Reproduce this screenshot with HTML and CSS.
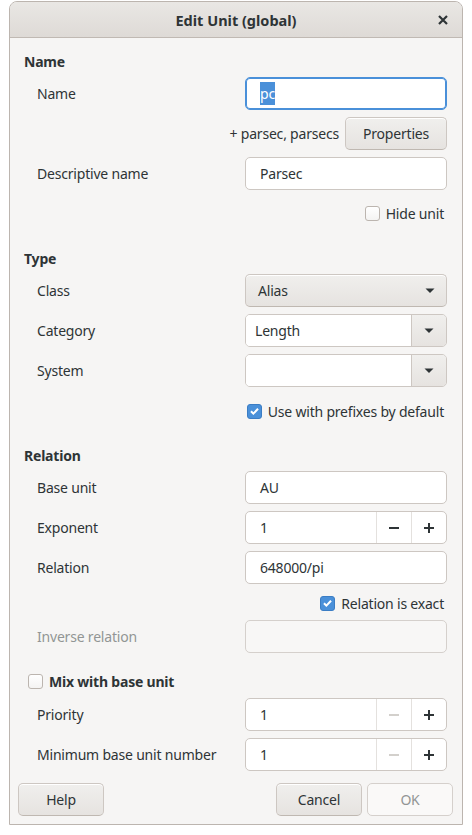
FILE: index.html
```html
<!DOCTYPE html>
<html lang="en">
<head>
<meta charset="utf-8">
<title>Edit Unit (global)</title>
<link rel="stylesheet" href="styles.css">
</head>
<body>
<div class="window">
  <header class="titlebar">
    <span></span>
    <span class="title">Edit Unit (global)</span>
    <span class="close">
      <svg width="10" height="10" viewBox="0 0 10 10"><path d="M1 1L9 9M9 1L1 9" stroke="#2e3436" stroke-width="2.2" stroke-linecap="butt"/></svg>
    </span>
  </header>

  <main class="content">
    <section class="group">
      <h2 class="heading">Name</h2>
      <div class="row">
        <span class="label">Name</span>
        <div class="entry focused"><span class="sel">pc</span></div>
      </div>
      <div class="row line-right">
        <span class="names">+ parsec, parsecs</span>
        <button class="btn props">Properties</button>
      </div>
      <div class="row">
        <span class="label">Descriptive name</span>
        <div class="entry">Parsec</div>
      </div>
      <div class="check-row hide-row">
        <span class="check"></span><span>Hide unit</span>
      </div>
    </section>

    <section class="group type-group">
      <h2 class="heading">Type</h2>
      <div class="row">
        <span class="label">Class</span>
        <div class="combo-btn"><span>Alias</span>
          <svg class="arrow" width="10" height="6" viewBox="0 0 10 6"><path d="M0.5 0.5h9l-4.5 4.5z" fill="#2e3436"/></svg>
        </div>
      </div>
      <div class="row">
        <span class="label">Category</span>
        <div class="combo-entry"><span class="combo-text">Length</span>
          <span class="combo-arrow"><svg width="10" height="6" viewBox="0 0 10 6"><path d="M0.5 0.5h9l-4.5 4.5z" fill="#2e3436"/></svg></span>
        </div>
      </div>
      <div class="row">
        <span class="label">System</span>
        <div class="combo-entry"><span class="combo-text"></span>
          <span class="combo-arrow"><svg width="10" height="6" viewBox="0 0 10 6"><path d="M0.5 0.5h9l-4.5 4.5z" fill="#2e3436"/></svg></span>
        </div>
      </div>
      <div class="check-row prefix-row">
        <span class="check on"><svg width="14" height="14" viewBox="0 0 14 14"><path d="M3.2 7.2l2.6 2.6 5-5.2" fill="none" stroke="#fff" stroke-width="2.2"/></svg></span><span>Use with prefixes by default</span>
      </div>
    </section>

    <section class="group relation-group">
      <h2 class="heading">Relation</h2>
      <div class="row">
        <span class="label">Base unit</span>
        <div class="entry">AU</div>
      </div>
      <div class="row">
        <span class="label">Exponent</span>
        <div class="spin">
          <span class="spin-text">1</span>
          <span class="spin-btn"><svg width="10" height="10" viewBox="0 0 10 10"><path d="M0 5h10" stroke="#2e3436" stroke-width="2"/></svg></span>
          <span class="spin-btn"><svg width="10" height="10" viewBox="0 0 10 10"><path d="M0 5h10M5 0v10" stroke="#2e3436" stroke-width="2"/></svg></span>
        </div>
      </div>
      <div class="row">
        <span class="label">Relation</span>
        <div class="entry">648000/pi</div>
      </div>
      <div class="check-row exact-row">
        <span class="check on"><svg width="14" height="14" viewBox="0 0 14 14"><path d="M3.2 7.2l2.6 2.6 5-5.2" fill="none" stroke="#fff" stroke-width="2.2"/></svg></span><span>Relation is exact</span>
      </div>
      <div class="row">
        <span class="label disabled">Inverse relation</span>
        <div class="entry disabled"></div>
      </div>
    </section>

    <section class="group mix-group">
      <div class="mix-head">
        <span class="check"></span><span class="heading-text">Mix with base unit</span>
      </div>
      <div class="row">
        <span class="label">Priority</span>
        <div class="spin">
          <span class="spin-text">1</span>
          <span class="spin-btn"><svg width="10" height="10" viewBox="0 0 10 10"><path d="M0 5h10" stroke="#d3d0cc" stroke-width="2"/></svg></span>
          <span class="spin-btn"><svg width="10" height="10" viewBox="0 0 10 10"><path d="M0 5h10M5 0v10" stroke="#2e3436" stroke-width="2"/></svg></span>
        </div>
      </div>
      <div class="row">
        <span class="label">Minimum base unit number</span>
        <div class="spin">
          <span class="spin-text">1</span>
          <span class="spin-btn"><svg width="10" height="10" viewBox="0 0 10 10"><path d="M0 5h10" stroke="#d3d0cc" stroke-width="2"/></svg></span>
          <span class="spin-btn"><svg width="10" height="10" viewBox="0 0 10 10"><path d="M0 5h10M5 0v10" stroke="#2e3436" stroke-width="2"/></svg></span>
        </div>
      </div>
    </section>
  </main>

  <footer class="footer">
    <button class="btn">Help</button>
    <span class="spacer"></span>
    <button class="btn">Cancel</button>
    <button class="btn disabled">OK</button>
  </footer>
</div>
</body>
</html>
```

FILE: styles.css
```css
* { box-sizing: border-box; }

body {
  margin: 0;
  background: #ffffff;
  font-family: "Noto Sans", "Open Sans", sans-serif;
  font-size: 14px;
  letter-spacing: -0.2px;
  color: #2e3436;
}

.window {
  margin: 1px 0 0 9px;
  width: 454px;
  border: 1px solid #bcb5af;
  border-radius: 8px 8px 0 0;
  background: #f6f5f4;
}

.titlebar {
  height: 36px;
  display: grid;
  grid-template-columns: 1fr auto 1fr;
  align-items: center;
  background: linear-gradient(#e9e7e4, #dedad6);
  border-bottom: 1px solid #c0b9b3;
  border-radius: 7px 7px 0 0;
}

.title {
  font-weight: bold;
  font-size: 14.5px;
  letter-spacing: 0;
}

.close {
  justify-self: end;
  margin-right: 14px;
  display: flex;
}

.content {
  padding: 14px 15px 0 14px;
}

.heading {
  margin: 0;
  height: 20px;
  line-height: 20px;
  font-size: 14px;
  font-weight: bold;
}

.row {
  display: grid;
  grid-template-columns: 1fr 202px;
  align-items: center;
  height: 33px;
  margin-top: 7px;
  padding-left: 13px;
}

.heading + .row { margin-top: 5px; }

.label.disabled { color: #929595; }

.line-right {
  display: flex;
  justify-content: flex-end;
  gap: 6px;
}

.entry {
  height: 33px;
  line-height: 31px;
  background: #ffffff;
  border: 1px solid #cdc7c2;
  border-radius: 5px;
  padding-left: 14px;
}

.entry.focused {
  border-color: #4a90d9;
  box-shadow: inset 0 0 0 1px #4a90d9;
}

.entry.disabled {
  background: #f8f7f6;
  border-color: #d5d0cc;
}

.sel {
  background: #4a90d9;
  color: #ffffff;
  padding: 2px 0;
}

.btn {
  height: 33px;
  font: inherit;
  letter-spacing: inherit;
  color: #2e3436;
  background: linear-gradient(#f0efed, #e6e3e0);
  border: 1px solid #cdc7c2;
  border-bottom-color: #bfb8b1;
  border-radius: 5px;
  box-shadow: inset 0 1px #ffffff;
  padding: 0;
}

.btn.props { width: 102px; }

.btn.disabled {
  background: #faf9f8;
  color: #929595;
  border-color: #d5d0cc;
  box-shadow: none;
}

.check-row {
  display: flex;
  justify-content: flex-end;
  align-items: center;
  gap: 6px;
  height: 20px;
  padding-right: 3px;
}

.hide-row { margin-top: 13px; }
.prefix-row { margin-top: 14px; }
.exact-row { margin-top: 9px; }

.check {
  width: 15px;
  height: 15px;
  border: 1px solid #bcb5af;
  border-radius: 3px;
  background: linear-gradient(#ffffff, #f4f3f2);
  display: flex;
  align-items: center;
  justify-content: center;
}

.check.on {
  background: #4a90d9;
  border-color: #3b7dc4;
}

.type-group { margin-top: 26px; }
.relation-group { margin-top: 25px; }
.mix-group { margin-top: 18px; }

.mix-head {
  display: flex;
  align-items: center;
  gap: 6px;
  height: 20px;
  padding-left: 4px;
}

.mix-head + .row { margin-top: 7px; }

.heading-text { font-weight: bold; }

.combo-btn {
  height: 33px;
  display: flex;
  align-items: center;
  justify-content: space-between;
  padding: 0 11px 0 12px;
  background: linear-gradient(#f0efed, #e6e3e0);
  border: 1px solid #cdc7c2;
  border-bottom-color: #bfb8b1;
  border-radius: 5px;
  box-shadow: inset 0 1px #ffffff;
}

.combo-entry {
  height: 33px;
  display: grid;
  grid-template-columns: 1fr 35px;
  border: 1px solid #cdc7c2;
  border-radius: 5px;
  overflow: hidden;
}

.combo-text {
  background: #ffffff;
  line-height: 31px;
  padding-left: 9px;
}

.combo-arrow {
  display: flex;
  align-items: center;
  justify-content: center;
  border-left: 1px solid #cdc7c2;
  background: linear-gradient(#f0efed, #e6e3e0);
}

.spin {
  height: 33px;
  display: grid;
  grid-template-columns: 1fr 35px 35px;
  background: #ffffff;
  border: 1px solid #cdc7c2;
  border-radius: 5px;
  overflow: hidden;
}

.spin-text {
  line-height: 31px;
  padding-left: 14px;
}

.spin-btn {
  display: flex;
  align-items: center;
  justify-content: center;
  border-left: 1px solid #e4e1de;
}

.footer {
  display: flex;
  gap: 5px;
  padding: 12px 9px 8px 8px;
}

.footer .btn { width: 86px; }

.spacer { flex: 1; }
```
